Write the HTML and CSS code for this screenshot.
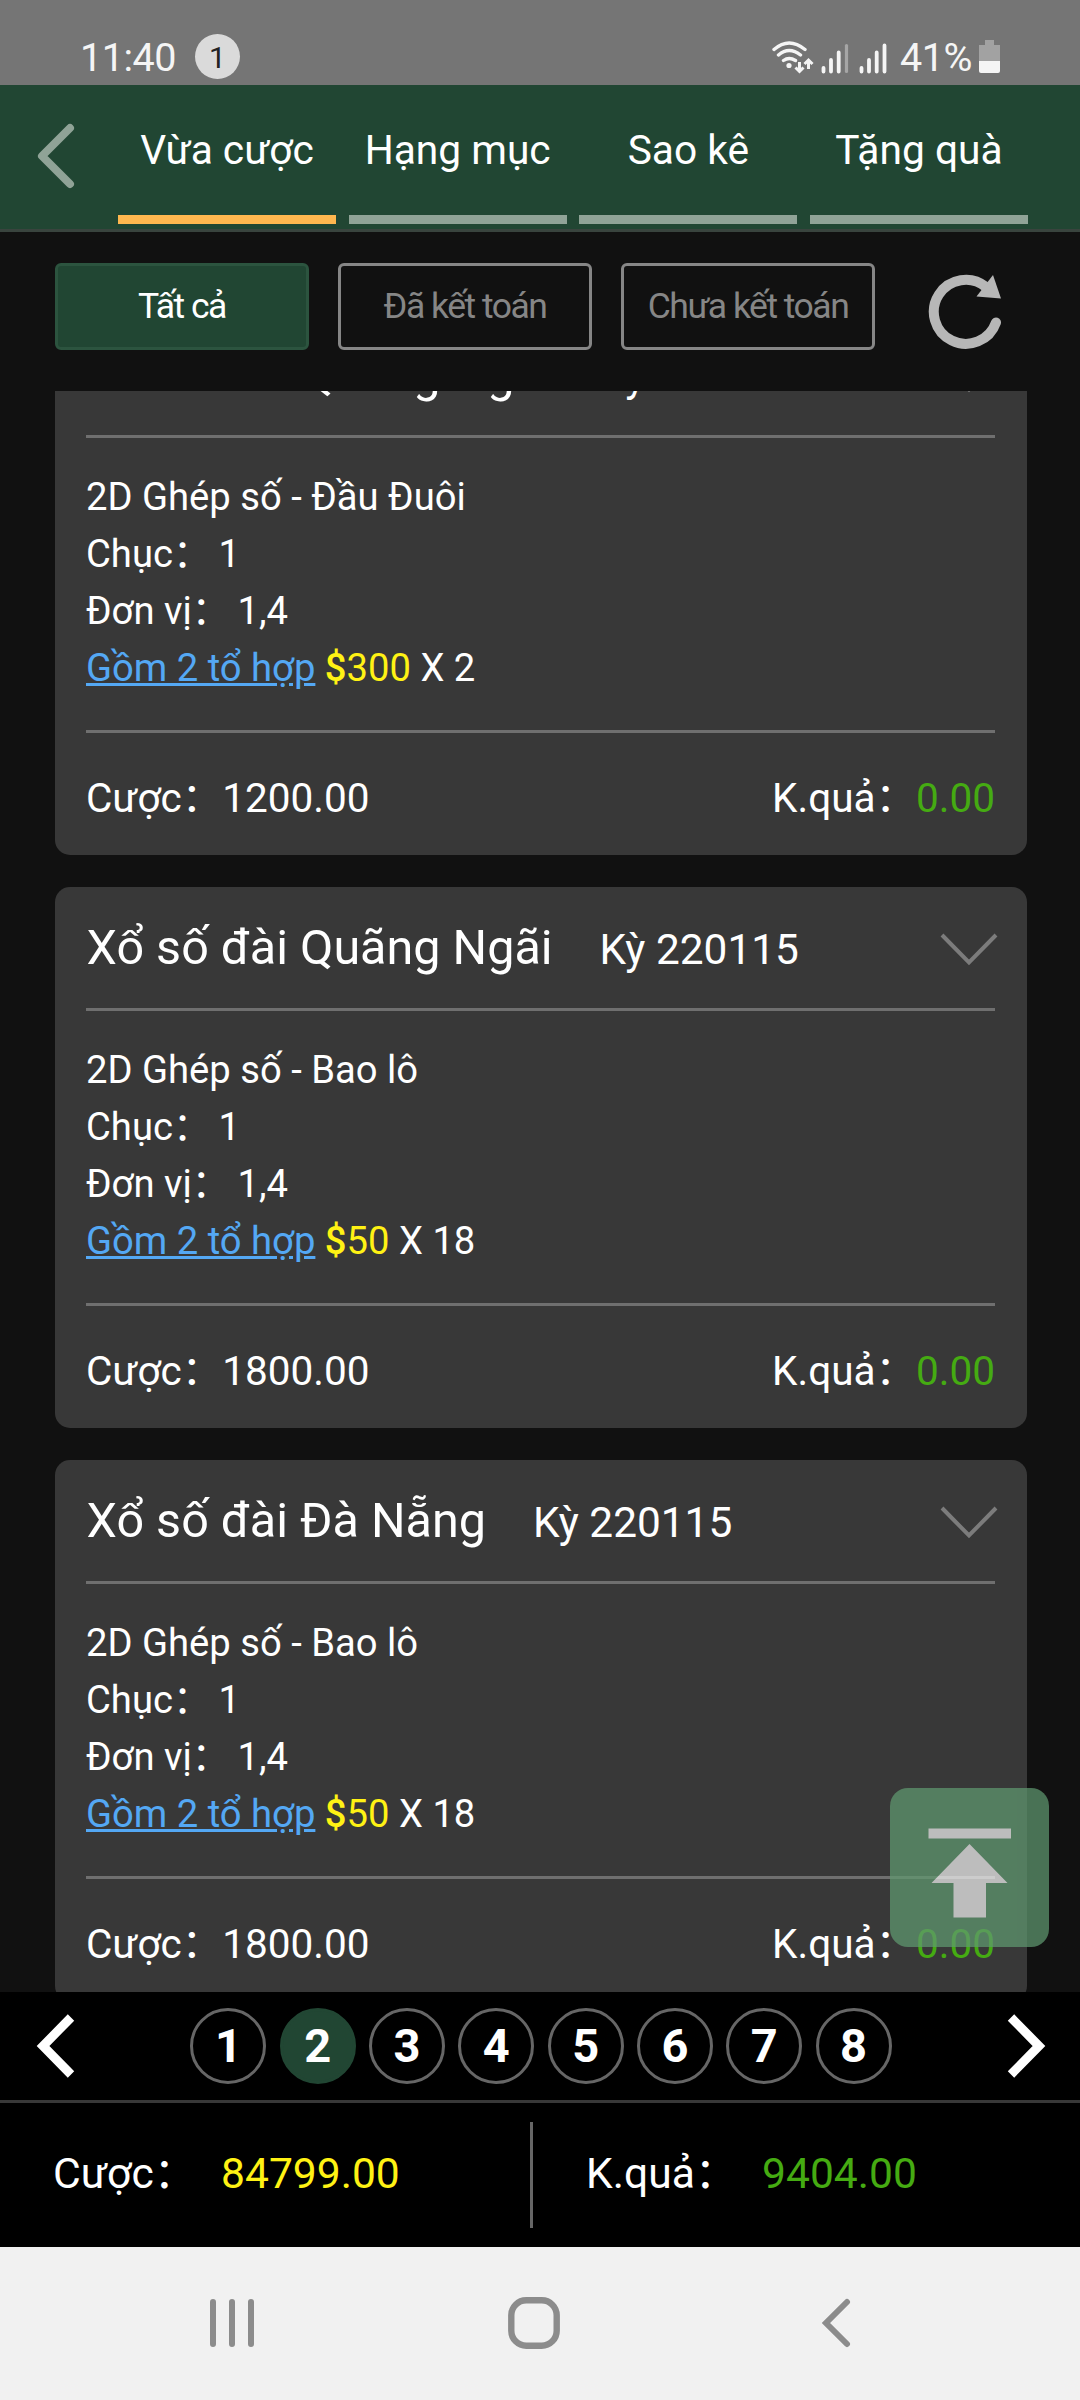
FILE: index.html
```html
<!DOCTYPE html>
<html lang="vi">
<head>
<meta charset="utf-8">
<title>Vừa cược</title>
<link rel="stylesheet" href="styles.css">
</head>
<body>
<div class="screen">
  <div class="status">
    <span class="clock">11:40</span>
    <span class="badge">1</span>
    <svg class="status-icons" width="120" height="40" viewBox="768 38 120 40" fill="none">
      <g stroke="#f5f5f5" stroke-width="3.4" stroke-linecap="round">
        <path d="M774 48.500Q789 35.500 805 48.500M778.500 54Q789 45 800.500 54M783.500 59.500Q789 55.500 795.500 59.500"/>
        <path d="M799.500 61V69M795.500 66.500L799.500 70.500L803.500 66.500M808.500 68V60M804.500 63L808.500 59L812.500 63" stroke-width="3" stroke-linecap="butt"/>
      </g>
      <circle cx="789" cy="64.500" r="2.600" fill="#f5f5f5"/>
      <g stroke="#f5f5f5" stroke-width="3.800" stroke-linecap="round">
        <path d="M823.500 67V70.500M831 59V70.500M838.700 51.500V70.500"/>
        <path d="M846.500 44.500V70.500" stroke="#a6a6a6" stroke-width="3.200"/>
        <path d="M861.500 67V70.500M869 59V70.500M876.700 51.500V70.500M884.500 44.500V70.500"/>
      </g>
    </svg>
    <span class="percent">41%</span>
    <svg class="battery" width="22" height="34" viewBox="0 0 22 34">
      <path d="M6 0H15V5H21V22H0V5H6Z" fill="#a2a2a2"/>
      <path d="M0 21H21V31Q21 33 19 33H2Q0 33 0 31Z" fill="#f5f5f5"/>
    </svg>
  </div>

  <header class="header">
    <svg class="back" width="40" height="68" viewBox="0 0 40 68"><path d="M34 6L6 34L34 62" fill="none" stroke="#90a397" stroke-width="8" stroke-linecap="round" stroke-linejoin="round"/></svg>
    <nav class="tabs">
      <a class="tab active">Vừa cược</a>
      <a class="tab">Hạng mục</a>
      <a class="tab">Sao kê</a>
      <a class="tab">Tặng quà</a>
    </nav>
  </header>

  <div class="filters">
    <button class="filter selected">Tất cả</button>
    <button class="filter">Đã kết toán</button>
    <button class="filter">Chưa kết toán</button>
    <svg class="refresh" width="76" height="76" viewBox="927 273 76 76">
      <path d="M996 322.500A32 32 0 1 1 986 287" fill="none" stroke="#b7b7b7" stroke-width="10" stroke-linecap="round"/>
      <path d="M993 275L1001 298.500L976.500 296.500Z" fill="#b7b7b7"/>
    </svg>
  </div>

  <main class="list">
    <article class="card">
      <div class="card-head">
        <h2 class="name">Xổ số đài Quãng Ngãi</h2><span class="issue">Kỳ 220115</span>
        <svg class="chevron" width="58" height="34" viewBox="0 0 58 34"><path d="M2 2L29 29.500L56 2" fill="none" stroke="#7c7c7c" stroke-width="4"/></svg>
      </div>
      <div class="card-body">
        <div>2D Ghép số - Đầu Đuôi</div>
        <div>Chục：<span class="digits">&nbsp;1</span></div>
        <div>Đơn vị：<span class="digits">&nbsp;1,4</span></div>
        <div><a class="combo">Gồm 2 tổ hợp</a> <span class="money"><span class="currency">$</span>300</span> X 2</div>
      </div>
      <div class="card-foot"><span>Cược：1200.00</span><span>K.quả：<span class="result">0.00</span></span></div>
    </article>

    <article class="card">
      <div class="card-head">
        <h2 class="name">Xổ số đài Quãng Ngãi</h2><span class="issue">Kỳ 220115</span>
        <svg class="chevron" width="58" height="34" viewBox="0 0 58 34"><path d="M2 2L29 29.500L56 2" fill="none" stroke="#7c7c7c" stroke-width="4"/></svg>
      </div>
      <div class="card-body">
        <div>2D Ghép số - Bao lô</div>
        <div>Chục：<span class="digits">&nbsp;1</span></div>
        <div>Đơn vị：<span class="digits">&nbsp;1,4</span></div>
        <div><a class="combo">Gồm 2 tổ hợp</a> <span class="money"><span class="currency">$</span>50</span> X 18</div>
      </div>
      <div class="card-foot"><span>Cược：1800.00</span><span>K.quả：<span class="result">0.00</span></span></div>
    </article>

    <article class="card">
      <div class="card-head">
        <h2 class="name">Xổ số đài Đà Nẵng</h2><span class="issue">Kỳ 220115</span>
        <svg class="chevron" width="58" height="34" viewBox="0 0 58 34"><path d="M2 2L29 29.500L56 2" fill="none" stroke="#7c7c7c" stroke-width="4"/></svg>
      </div>
      <div class="card-body">
        <div>2D Ghép số - Bao lô</div>
        <div>Chục：<span class="digits">&nbsp;1</span></div>
        <div>Đơn vị：<span class="digits">&nbsp;1,4</span></div>
        <div><a class="combo">Gồm 2 tổ hợp</a> <span class="money"><span class="currency">$</span>50</span> X 18</div>
      </div>
      <div class="card-foot"><span>Cược：1800.00</span><span>K.quả：<span class="result">0.00</span></span></div>
    </article>

    <div class="to-top">
      <svg width="159" height="159" viewBox="890 1788 159 159" fill="#f1f1f1">
        <path d="M928.500 1828.500H1011V1838.500H928.500ZM969.500 1844L1007.500 1883H986V1917.500H953.500V1883H931.500Z"/>
      </svg>
    </div>
  </main>

  <div class="pager">
    <svg width="40" height="66" viewBox="0 0 40 66"><path d="M35 4.500L7 33L35 61.500" fill="none" stroke="#fff" stroke-width="9"/></svg>
    <div class="pages">
      <span class="page">1</span>
      <span class="page current">2</span>
      <span class="page">3</span>
      <span class="page">4</span>
      <span class="page">5</span>
      <span class="page">6</span>
      <span class="page">7</span>
      <span class="page">8</span>
    </div>
    <svg width="40" height="66" viewBox="0 0 40 66"><path d="M5 4.500L33 33L5 61.500" fill="none" stroke="#fff" stroke-width="9"/></svg>
  </div>

  <div class="totals">
    <div class="total"><span class="total-label">Cược：</span><span class="money">84799.00</span></div>
    <div class="total"><span class="total-label">K.quả：</span><span class="result">9404.00</span></div>
  </div>

  <div class="sysnav">
    <svg width="44" height="48" viewBox="0 0 44 48"><path d="M3 3V45M22 3V45M41 3V45" stroke="#8c8c8c" stroke-width="6" stroke-linecap="round"/></svg>
    <svg class="home" width="52" height="52" viewBox="0 0 52 52"><rect x="3.300" y="3.300" width="45.400" height="45.400" rx="15" fill="none" stroke="#8c8c8c" stroke-width="6.400"/></svg>
    <svg width="30" height="50" viewBox="0 0 30 50"><path d="M26 4L5 25L26 46" fill="none" stroke="#8c8c8c" stroke-width="6" stroke-linecap="round"/></svg>
  </div>
</div>
</body>
</html>
```
FILE: styles.css
```css
* { box-sizing: border-box; }

body {
  margin: 0;
  background: #111;
  color: #fff;
  font-family: Roboto, "Noto Sans CJK SC", sans-serif;
}

svg { display: block; flex: none; }

.screen {
  width: 1080px;
  height: 2400px;
  display: flex;
  flex-direction: column;
  overflow: hidden;
}

/* Status bar */
.status {
  height: 85px;
  flex: none;
  display: flex;
  align-items: center;
  padding: 28px 79px 0 80px;
  background: #757575;
  color: #f5f5f5;
  font-size: 39.5px;
  line-height: 60px;
}
.clock { width: 115px; padding-top: 3px; letter-spacing: -.5px; }
.badge {
  width: 45px;
  height: 45px;
  border-radius: 50%;
  background: #dadada;
  color: #222;
  font-size: 30px;
  line-height: 47px;
  text-align: center;
}
.status-icons { margin-left: auto; margin-top: 4px; }
.percent { margin-left: 12px; width: 79px; padding-top: 3px; letter-spacing: -.5px; white-space: nowrap; }

/* Header */
.header {
  height: 147px;
  flex: none;
  display: flex;
  background: #214633;
  border-bottom: 3px solid #39443e;
}
.back { margin: 37px 42px 0 36px; }
.tabs {
  width: 910px;
  display: grid;
  grid-template-columns: repeat(4, 1fr);
  gap: 12.6px;
}
.tab {
  height: 139px;
  border-bottom: 9px solid #90a397;
  font-size: 40.7px;
  line-height: 131px;
  text-align: center;
}
.tab.active { border-color: #ffb74f; }

/* Filters */
.filters {
  height: 159px;
  flex: none;
  display: flex;
  gap: 29px;
  padding: 31px 0 0 55px;
}
.filter {
  width: 254px;
  height: 87px;
  padding: 0;
  border: 3px solid #868686;
  border-radius: 6px;
  background: none;
  color: #868686;
  font: 35.5px/81px Roboto, sans-serif;
  letter-spacing: -1.5px;
}
.filter.selected {
  background: #214633;
  border-color: #2c543f;
  color: #fff;
}
.refresh { margin: 10px 0 0 23px; }

/* Bet list */
.list {
  position: relative;
  height: 1601px;
  flex: none;
  overflow: hidden;
  padding: 0 53px 0 55px;
}
.card {
  height: 541px;
  margin-bottom: 32px;
  padding: 0 32px 0 31px;
  border-radius: 15px;
  background: #383838;
}
.card:first-child { margin-top: -77px; }
.card-head {
  height: 124px;
  display: flex;
  align-items: baseline;
  border-bottom: 3px solid #6f6f6f;
  line-height: 121px;
}
.name { margin: 0 0 0 .5px; font-size: 48.5px; font-weight: 400; }
.issue { margin-left: 47px; font-size: 42.4px; }
.chevron { margin: 4px -3px 0 auto; align-self: center; }
.card-body {
  height: 295px;
  padding-top: 31px;
  border-bottom: 3px solid #6f6f6f;
  font-size: 38.2px;
  line-height: 57px;
}
.digits { margin-left: -2px; }
.currency { font-weight: 500; }
.combo { color: #54a8f4; text-decoration: underline; }
.money { color: #fff214; }
.result { color: #45ab12; }
.card-foot {
  display: flex;
  justify-content: space-between;
  padding-top: 9px;
  font-size: 40.5px;
  line-height: 113px;
}
.to-top {
  position: absolute;
  left: 890px;
  top: 1397px;
  border-radius: 18px;
  background: #609970;
  opacity: .72;
}

/* Pagination */
.pager {
  height: 111px;
  flex: none;
  display: flex;
  justify-content: space-between;
  align-items: center;
  padding: 0 34px 0 36px;
  background: #000;
  border-bottom: 3px solid #383838;
}
.pages {
  display: flex;
  gap: 13.3px;
}
.page {
  width: 76px;
  height: 76px;
  border: 3px solid #666;
  border-radius: 50%;
  font-size: 47px;
  font-weight: 700;
  line-height: 70px;
  text-align: center;
}
.page.current { background: #214633; border-color: #214633; }

/* Totals */
.totals {
  height: 144px;
  flex: none;
  display: flex;
  align-items: center;
  background: #000;
  font-size: 42.6px;
}
.total {
  display: flex;
  height: 106px;
  line-height: 103px;
}
.total:first-child {
  width: 533px;
  padding-left: 53px;
  border-right: 3px solid #666;
}
.total:last-child { padding-left: 53px; }
.total-label { width: 168px; white-space: nowrap; }
.total:last-child .total-label { width: 176px; }

/* System navigation */
.sysnav {
  height: 153px;
  flex: none;
  display: flex;
  align-items: center;
  justify-content: space-between;
  padding: 0 229px 1px 210px;
  background: #f1f1f1;
}
.home { margin-right: 7px; }
```
